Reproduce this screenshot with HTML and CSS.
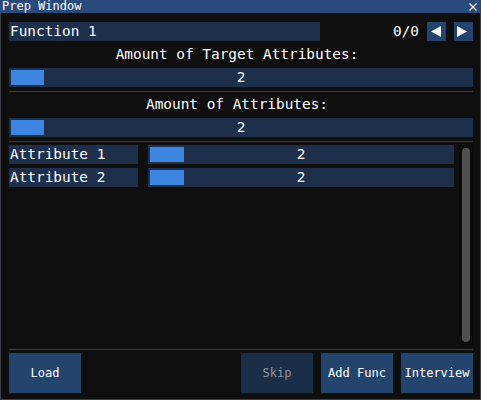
FILE: index.html
```html
<!DOCTYPE html>
<html>
<head>
<meta charset="utf-8">
<link rel="stylesheet" href="styles.css">
</head>
<body>
<div class="window">
  <div class="titlebar">
    <span class="title">Prep Window</span>
    <svg class="close" width="8" height="8" viewBox="0 0 8 8"><path d="M0.5 0.5 L7.5 7.5 M7.5 0.5 L0.5 7.5" stroke="#ffffff" stroke-width="1.3" fill="none"/></svg>
  </div>
  <div class="body">
    <div class="toprow">
      <div class="frame fname">Function 1</div>
      <span class="counter">0/0</span>
      <button class="arrow"><svg width="19" height="19" viewBox="0 0 19 19"><polygon points="4,9.5 14,4 14,15" fill="#ffffff"/></svg></button>
      <button class="arrow"><svg width="19" height="19" viewBox="0 0 19 19"><polygon points="3,4 13,9.5 3,15" fill="#ffffff"/></svg></button>
    </div>
    <div class="label">Amount of Target Attributes:</div>
    <div class="slider"><div class="grab"></div><span class="val">2</span></div>
    <div class="sep"></div>
    <div class="label second">Amount of Attributes:</div>
    <div class="slider"><div class="grab"></div><span class="val">2</span></div>
    <div class="sep"></div>
    <div class="child">
      <div class="list">
        <div class="attr">
          <div class="frame aname">Attribute 1</div>
          <div class="slider small"><div class="grab"></div><span class="val">2</span></div>
        </div>
        <div class="attr">
          <div class="frame aname">Attribute 2</div>
          <div class="slider small"><div class="grab"></div><span class="val">2</span></div>
        </div>
      </div>
      <div class="scrollbar"><div class="thumb"></div></div>
    </div>
    <div class="sep bottom"></div>
    <div class="buttons">
      <button class="btn">Load</button>
      <div class="spacer"></div>
      <button class="btn disabled">Skip</button>
      <button class="btn">Add Func</button>
      <button class="btn">Interview</button>
    </div>
  </div>
</div>
</body>
</html>
```

FILE: styles.css
```css
* { box-sizing: border-box; }
html, body {
  margin: 0;
  padding: 0;
  background: #0f0f0f;
}
body {
  width: 481px;
  height: 400px;
  overflow: hidden;
  font-family: "DejaVu Sans Mono", "Liberation Mono", monospace;
  color: #ffffff;
}
.window {
  width: 481px;
  height: 400px;
  display: flex;
  flex-direction: column;
  background: #0f0f0f;
}
.titlebar {
  height: 13px;
  flex: none;
  background: #294a7a;
  display: flex;
  align-items: flex-start;
  justify-content: space-between;
  padding: 0 4px 0 2px;
}
.title {
  font-size: 12px;
  line-height: 11px;
  padding-top: 1px;
  color: #ffffff;
}
.close {
  margin-top: 3px;
  display: block;
}
.body {
  flex: 1;
  display: flex;
  flex-direction: column;
  border: 1px solid #3e3e47;
  border-top: none;
  padding: 9px 7px 6px 8px;
  font-size: 14.4px;
  line-height: 19px;
}
.toprow {
  display: flex;
  align-items: center;
  height: 19px;
}
.frame {
  background: #1d2f4a;
  height: 19px;
  padding-left: 1px;
  white-space: nowrap;
}
.fname {
  width: 311px;
}
.counter {
  margin-left: auto;
  margin-right: 8px;
}
.arrow {
  width: 19px;
  height: 19px;
  padding: 0;
  border: none;
  background: #23456d;
  display: block;
}
.arrow svg { display: block; }
.arrow + .arrow { margin-left: 8px; }
.label {
  margin-top: 4px;
  height: 19px;
  text-align: center;
  padding-right: 8px;
}
.slider {
  margin-top: 4px;
  height: 19px;
  background: #1d2f4a;
  display: grid;
  grid-template-columns: 1fr;
  grid-template-rows: 19px;
  align-items: center;
}
.slider > * {
  grid-column: 1;
  grid-row: 1;
}
.grab {
  justify-self: start;
  margin-left: 2px;
  width: 33px;
  height: 15px;
  background: #3d85e0;
}
.val {
  justify-self: center;
  line-height: 19px;
}
.sep {
  margin-top: 4px;
  height: 1px;
  background: #3e3e47;
  flex: none;
}
.label.second { margin-top: 3px; }
.child {
  margin-top: 3px;
  flex: 1;
  display: flex;
}
.list {
  flex: 1;
  display: flex;
  flex-direction: column;
  gap: 4px;
}
.attr {
  display: flex;
  gap: 10px;
}
.aname { width: 129px; }
.slider.small {
  margin-top: 0;
  width: 306px;
}
.slider.small .grab { width: 34px; }
.scrollbar {
  width: 14px;
  background: #0a0a0a;
  padding: 3px 3px;
  display: flex;
}
.thumb {
  flex: 1;
  background: #4f4f4f;
  border-radius: 4px;
}
.sep.bottom { margin-top: 4px; }
.buttons {
  margin-top: 3px;
  display: flex;
  gap: 8px;
  height: 40px;
}
.spacer { flex: 1; }
.btn {
  width: 72px;
  height: 40px;
  border: none;
  padding: 0;
  background: #23456d;
  color: #ffffff;
  font-family: "DejaVu Sans Mono", "Liberation Mono", monospace;
  font-size: 12px;
}
.btn.disabled {
  background: #1b2e47;
  color: #8e959f;
}
```
